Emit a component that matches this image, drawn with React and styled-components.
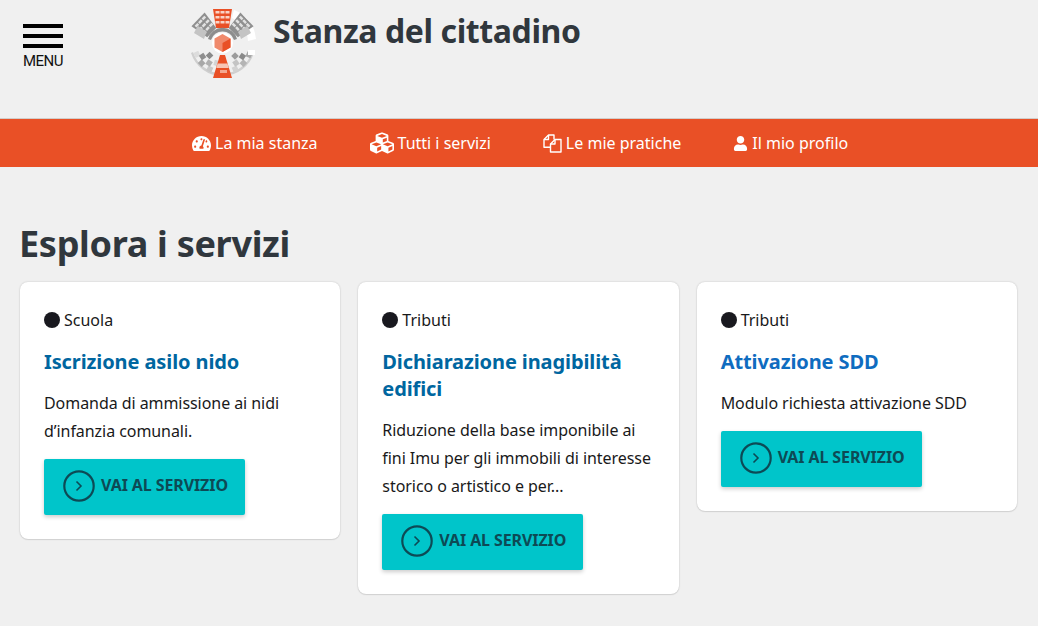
import React from "react";
import styled, { createGlobalStyle } from "styled-components";
import { FaTachometerAlt, FaCubes, FaUser } from "react-icons/fa";

const Global = createGlobalStyle`
  html, body { margin: 0; padding: 0; background: #f0f0f0; }
  body { font-family: "Noto Sans", "Open Sans", sans-serif; color: #19191a; width: 1038px; height: 626px; overflow: hidden; }
  * { box-sizing: border-box; }
`;
const Page = styled.div`display: flex; flex-direction: column;`;
const Header = styled.header`height: 118px; display: flex; align-items: flex-start;`;
const MenuButton = styled.div`width: 190px; padding: 24px 0 0 23px; display: flex; flex-direction: column; align-items: flex-start;`;
const Burger = styled.div`width: 40px; height: 24px; display: flex; flex-direction: column; justify-content: space-between;`;
const BurgerBar = styled.span`display: block; height: 4px; background: #000;`;
const MenuLabel = styled.span`font-family: Roboto, sans-serif; font-size: 15px; line-height: 18px; margin-top: 4px; width: 40px; text-align: center; white-space: nowrap; letter-spacing: -0.5px; color: #111;`;
const LogoWrap = styled.div`width: 83px; padding-top: 9px; svg { display: block; filter: blur(0.35px); }`;
const SiteTitle = styled.h1`margin: 0; padding-top: 9px; font-size: 32px; line-height: 44px; font-weight: 700; color: #30373d; letter-spacing: -0.4px;`;
const Nav = styled.nav`height: 49px; background: #e95026; border-top: 1px solid #d2cdca; padding-left: 192px; display: flex; align-items: center; gap: 52px;`;
const NavItem = styled.a`display: flex; align-items: center; gap: 4px; color: #fff; font-size: 16px; svg { display: block; flex: none; }`;
const Main = styled.main`padding: 52px 21px 0 20px;`;
const Heading = styled.h2`margin: 0 0 13px -1px; font-size: 36px; line-height: 50px; font-weight: 700; color: #30373d; letter-spacing: -0.3px;`;
const Cards = styled.div`display: grid; grid-template-columns: repeat(3, 1fr); column-gap: 18px; align-items: start;`;
const Card = styled.article`background: #fff; border-radius: 8px; box-shadow: 0 0 2px rgba(0,0,0,.2), 0 1px 1px rgba(0,0,0,.08); padding: 24px;`;
const Category = styled.div`display: flex; align-items: center; gap: 4px; height: 28px; font-size: 16px; color: #19191a;`;
const Dot = styled.span`width: 16px; height: 16px; border-radius: 50%; background: #19191f;`;
const CardTitle = styled.h3`margin: 14px 0 0; font-size: 20px; line-height: 27px; font-weight: 700; letter-spacing: -0.1px; color: ${p => p.$bright ? "#0f6cc0" : "#0066a0"};`;
const CardText = styled.p`margin: 14px 0 0; font-size: 16px; line-height: 28px; letter-spacing: -0.06px; color: #19191a;`;
const ServiceButton = styled.a`margin-top: 14px; width: 201px; height: 56px; padding: 0 0 2px 19px; background: #00c5ca; border-radius: 2px; box-shadow: 0 2px 4px rgba(0,0,0,.2); display: flex; align-items: center; gap: 6px; font-size: 16px; font-weight: 700; color: #0d4a55; letter-spacing: -0.1px; svg { display: block; flex: none; }`;
const ButtonLabel = styled.span`padding-bottom: 2px;`;

const FilesIcon = () => (
  <svg width="19" height="19" viewBox="0 0 19 19" fill="none" stroke="#fff" strokeWidth="1.4" strokeLinejoin="round">
    <path d="M7.500 13.200H1V5.500L5.500 1H11v4.500" />
    <path d="M5.500 1v4.500H1" />
    <path d="M7.500 18V10L12 5.500h6V18z" />
    <path d="M12 5.500V10H7.500" />
  </svg>
);
const ArrowCircle = () => (
  <svg width="32" height="32" viewBox="0 0 32 32" fill="none" stroke="#0d4a55">
    <circle cx="16" cy="16" r="14.700" strokeWidth="2.200" />
    <path d="M13.500 11.500L18 16l-4.500 4.500" strokeWidth="1.600" />
  </svg>
);

const O = "#e95026";
const CX = 32.5;
const CY = 34;
const Tower = ({ angle, frame, pane }) => (
  <g transform={`rotate(${angle} ${CX} ${CY})`}>
    <path d="M23 0h19l-3 19H26z" fill={frame} />
    {[2, 7, 12].map(y => [25.500, 30.500, 35.500].map(x => (
      <rect key={`${x}-${y}`} x={x} y={y} width="4" height="2.500" fill={pane} />
    )))}
  </g>
);
const polar = (r, deg) => {
  const a = (deg * Math.PI) / 180;
  return [CX + r * Math.sin(a), CY + r * Math.cos(a)];
};
const BOTTOM_TILES = [
  [29, 66, "#a8a8a8"], [29, 46, "#b4b4b4"], [29, 26, "#d2d2d2"], [24, 56, "#8a8a8a"], [24, 34, "#c4c4c4"],
  [18, 44, "#9c9c9c"], [28, -66, "#dcdcdc"], [29, -46, "#a8a8a8"],
  [29, -26, "#c8c8c8"], [24, -56, "#8f8f8f"], [24, -34, "#b0b0b0"], [18, -46, "#8a8a8a"], [21, -16, "#d4d4d4"],
];
const Logo = () => (
  <svg width="67" height="70" viewBox="0 0 67 70">
    <path d="M44 1A34 34 0 0 1 66 30l-8 2A26 26 0 0 0 42 9z" fill="#fff" />
    <path d="M3 43A31 31 0 0 0 62 43l2 .8A33 33 0 0 1 1 44z" fill="#cfcfcf" />
    <Tower angle={0} frame={O} pane="#f9d3c6" />
    <Tower angle={-46} frame="#8f8f8f" pane="#e2e2e2" />
    <Tower angle={46} frame="#8f8f8f" pane="#e2e2e2" />
    <path d="M4 24A32 32 0 0 1 8 17l9 6A22 22 0 0 0 14 30z" fill="#c4c4c4" />
    <path d="M61 24A32 32 0 0 0 57 17l-9 6A22 22 0 0 1 51 30z" fill="#c4c4c4" />
    <path d="M18 30a15 15 0 0 1 29 0l-3 1a12 12 0 0 0-23 0z" fill="#8d8d8d" />
    <circle cx={CX} cy={CY} r="10.500" fill="#fff" />
    <path d="M32.500 25l8 4.500v9l-8 4.500-8-4.500v-9z" fill="#f08a6c" />
    <path d="M32.500 34l8-4.500v9l-8 4.500z" fill={O} />
    {BOTTOM_TILES.map(([r, d, c], i) => {
      const [x, y] = polar(r, d);
      return <rect key={i} x={x - 2.700} y={y - 2.700} width="5.400" height="5.400" fill={c} transform={`rotate(${-d} ${x} ${y})`} />;
    })}
    <rect x="58" y="41" width="7" height="5" fill="#fff" />
    <path d="M30 46h5l7 23H23z" fill={O} />
    <path d="M27.500 54.500h10l1.200 4.500H26.300z" fill="#f7c5b5" />
    <rect x="30" y="61" width="7" height="3" fill="#f4a78f" />
  </svg>
);

const Service = ({ cat, title, text, bright }) => (
  <Card>
    <Category><Dot />{cat}</Category>
    <CardTitle $bright={bright}>{title}</CardTitle>
    <CardText>{text}</CardText>
    <ServiceButton><ArrowCircle /><ButtonLabel>VAI AL SERVIZIO</ButtonLabel></ServiceButton>
  </Card>
);

export default function App() {
  return (
    <Page>
      <Global />
      <Header>
        <MenuButton>
          <Burger><BurgerBar /><BurgerBar /><BurgerBar /></Burger>
          <MenuLabel>MENU</MenuLabel>
        </MenuButton>
        <LogoWrap><Logo /></LogoWrap>
        <SiteTitle>Stanza del cittadino</SiteTitle>
      </Header>
      <Nav>
        <NavItem><FaTachometerAlt size={19} />La mia stanza</NavItem>
        <NavItem><FaCubes size={24} />Tutti i servizi</NavItem>
        <NavItem><FilesIcon />Le mie pratiche</NavItem>
        <NavItem><FaUser size={15} />Il mio profilo</NavItem>
      </Nav>
      <Main>
        <Heading>Esplora i servizi</Heading>
        <Cards>
          <Service cat="Scuola" title="Iscrizione asilo nido" text={<>Domanda di ammissione ai nidi<br />d’infanzia comunali.</>} />
          <Service cat="Tributi" title={<>Dichiarazione inagibilità<br />edifici</>} text={<>Riduzione della base imponibile ai<br />fini Imu per gli immobili di interesse<br />storico o artistico e per...</>} />
          <Service cat="Tributi" title="Attivazione SDD" text="Modulo richiesta attivazione SDD" bright />
        </Cards>
      </Main>
    </Page>
  );
}
